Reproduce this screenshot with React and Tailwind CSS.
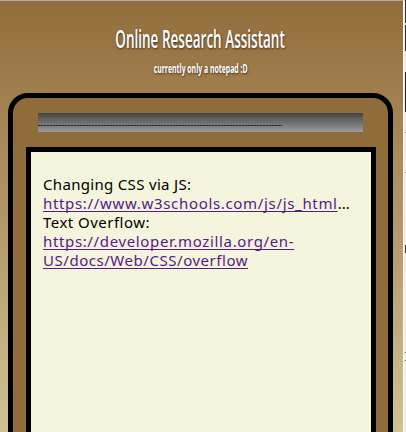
function Link({ children, className }) {
  return <a className={`inline-block h-[19px] align-top text-[#551a8b] underline decoration-1 underline-offset-[2px] [text-decoration-skip-ink:none] ${className}`}>{children}</a>;
}

export default function App() {
  return (
    <div className="flex h-[432px] w-[406px] overflow-hidden bg-[#e9eeee]">
      <main className="flex h-[432px] w-[404px] shrink-0 flex-col border-t border-r border-t-[#a9adab] border-r-white bg-linear-to-b from-[#936d3c] to-[#d0c194]">
        <header className="flex h-[92px] w-[401px] shrink-0 flex-col items-center text-white font-['Open_Sans',sans-serif] [text-shadow:1px_1px_3px_#403020]">
          <h1 className="mt-[19px] h-[36px] origin-center scale-x-[0.52] text-[26px] leading-[36px] font-semibold whitespace-nowrap">
            Online Research Assistant
          </h1>
          <p className="mt-[3px] h-[18px] origin-center scale-x-[0.53] text-[13px] leading-[18px] font-bold whitespace-nowrap">
            currently only a notepad :D
          </p>
        </header>
        <section className="ml-2 flex h-[400px] w-[385px] shrink-0 flex-col rounded-t-[20px] border-[5px] border-black bg-[#916c3b] pt-[15px]">
          <div className="ml-[25px] h-[19px] w-[325px] shrink-0 bg-linear-to-b from-[#444] to-[#9c9c9c] pt-[12px]">
            <div className="h-px w-[244px] bg-[repeating-linear-gradient(90deg,#292929_0px,#292929_2px,#555_2px,#555_3px)]" />
          </div>
          <article className="mt-[15px] ml-[13px] h-[360px] w-[350px] shrink-0 border-[5px] border-black bg-[#f5f4dc] pt-[23px] pl-3 text-[15px] leading-[19px] whitespace-nowrap text-black font-['Noto_Sans',sans-serif]">
            <p className="h-[19px] tracking-[0.32px]">Changing CSS via JS:</p>
            <p className="h-[19px]">
              <Link className="tracking-[0.67px]">https://www.w3schools.com/js/js_html</Link>...
            </p>
            <p className="h-[19px] tracking-[0.47px]">Text Overflow:</p>
            <p className="h-[19px]"><Link className="tracking-[0.64px]">https://developer.mozilla.org/en-</Link></p>
            <p className="h-[19px]"><Link className="tracking-[0.54px]">US/docs/Web/CSS/overflow</Link></p>
          </article>
        </section>
      </main>
      <aside className="flex w-[2px] flex-col items-end">
        <div className="h-[23px] w-[1px] bg-[#333]" />
        <div className="mt-[2px] h-[26px] w-[1px] bg-[#292938]" />
        <div className="mt-[21px] h-[40px] w-[1px] bg-[#222]" />
        <div className="mt-[20px] h-px w-[1px] bg-[#aaa]" />
        <div className="mt-[39px] h-px w-[1px] bg-[#aaa]" />
        <div className="mt-[72px] h-[8px] w-[1px] bg-[#333]" />
        <div className="mt-[99px] h-[9px] w-[1px] border-y border-[#555]" />
      </aside>
    </div>
  );
}
